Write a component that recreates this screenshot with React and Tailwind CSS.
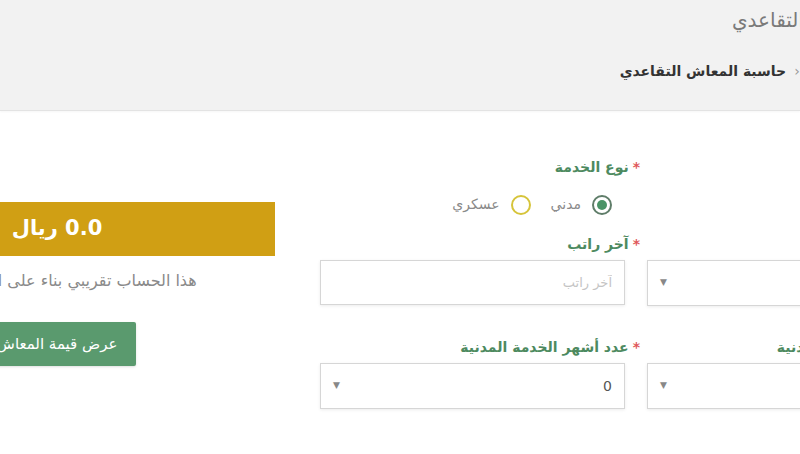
import { useState } from 'react';

function Star() {
  return <span className="text-[#e0585a] ml-1">*</span>;
}

function Field({ label, children }) {
  return (
    <div className="flex flex-col">
      <label className="h-5 leading-5 text-[14px] font-bold text-[#4d8a60] mr-[-15px] whitespace-nowrap">
        <Star />
        {label}
      </label>
      <div className="mt-[6px]">{children}</div>
    </div>
  );
}

function SelectBox({ value }) {
  return (
    <div className="h-[46px] border border-[#d6d6d6] bg-white shadow-[0_1px_3px_rgba(0,0,0,0.08)] flex items-center justify-between px-3">
      <span className="text-[14px] text-[#555]">{value}</span>
      <span className="text-[9px] text-[#888]">▼</span>
    </div>
  );
}

export default function App() {
  const [service, setService] = useState('civil');

  return (
    <div dir="rtl" className="w-[800px] h-[454px] overflow-hidden bg-white font-['DejaVu_Sans',sans-serif]">
      {/* page header */}
      <header className="h-[111px] bg-[#f2f2f2] border-b border-[#e3e3e3] shadow-[0_1px_2px_rgba(0,0,0,0.04)]">
        <div className="mr-[-62px] pt-[6px] flex flex-col items-start">
          <h1 className="mr-[-70px] text-[20px] leading-7 text-[#7a7a7a] whitespace-nowrap">حاسبة المعاش التقاعدي</h1>
          <nav className="mt-[27px] mr-[-4px] flex items-center gap-2 text-[14px] font-bold text-[#333] whitespace-nowrap">
            <span>الرئيسية</span>
            <span className="text-[#999] font-normal">‹</span>
            <span>حاسبة المعاش التقاعدي</span>
          </nav>
        </div>
      </header>

      <main className="w-[1135px] mr-[-174px] pt-[46px] flex gap-[45px]">
        {/* form */}
        <section className="w-[654px] pr-[22px]">
          <div className="grid grid-cols-[305px_305px] gap-x-[22px]">
            <div />
            <div className="flex flex-col">
              <label className="h-5 leading-5 text-[14px] font-bold text-[#4d8a60] mr-[-15px]">
                <Star />
                نوع الخدمة
              </label>
              <div className="mt-[17px] pr-[13px] flex items-center gap-[20px] text-[14px] text-[#8a8a8a]">
                <button onClick={() => setService('civil')} className="flex items-center gap-[11px]">
                  <span className="w-5 h-5 rounded-full border-2 border-[#5f7d69] flex items-center justify-center">
                    {service === 'civil' && <span className="w-[10px] h-[10px] rounded-full bg-[#4a9467]" />}
                  </span>
                  مدني
                </button>
                <button onClick={() => setService('military')} className="flex items-center gap-[11px]">
                  <span className="w-5 h-5 rounded-full border-2 border-[#d6c43a] flex items-center justify-center">
                    {service === 'military' && <span className="w-[10px] h-[10px] rounded-full bg-[#d6c43a]" />}
                  </span>
                  عسكري
                </button>
              </div>
            </div>
          </div>

          <div className="mt-[19px] grid grid-cols-[305px_305px] gap-x-[22px] gap-y-[31px]">
            <Field label="الحالة">
              <SelectBox value="" />
            </Field>
            <Field label="آخر راتب">
              <input
                placeholder="آخر راتب"
                className="w-full h-[45px] border border-[#d6d6d6] bg-white shadow-[0_1px_3px_rgba(0,0,0,0.08)] px-3 text-[13px] placeholder:text-[#c4c4c4] outline-none"
              />
            </Field>
            <Field label="عدد سنوات الخدمة المدنية">
              <SelectBox value="" />
            </Field>
            <Field label="عدد أشهر الخدمة المدنية">
              <SelectBox value="0" />
            </Field>
          </div>
        </section>

        {/* result */}
        <section className="w-[436px] flex flex-col items-center">
          <div className="mt-[45px] w-full h-[54px] bg-[#d09f14] flex items-center justify-center">
            <span className="text-[21px] font-bold text-white">0.0 ريال</span>
          </div>
          <p className="mt-[15px] h-5 leading-5 text-[16px] text-[#8a8a8a] whitespace-nowrap">
            هذا الحساب تقريبي بناء على الراتب الأخير
          </p>
          <button className="mt-[31px] h-[44px] px-[19px] bg-[#5a9a6e] text-white text-[15px] rounded-[2px] shadow-sm whitespace-nowrap">
            عرض قيمة المعاش
          </button>
        </section>
      </main>
    </div>
  );
}
